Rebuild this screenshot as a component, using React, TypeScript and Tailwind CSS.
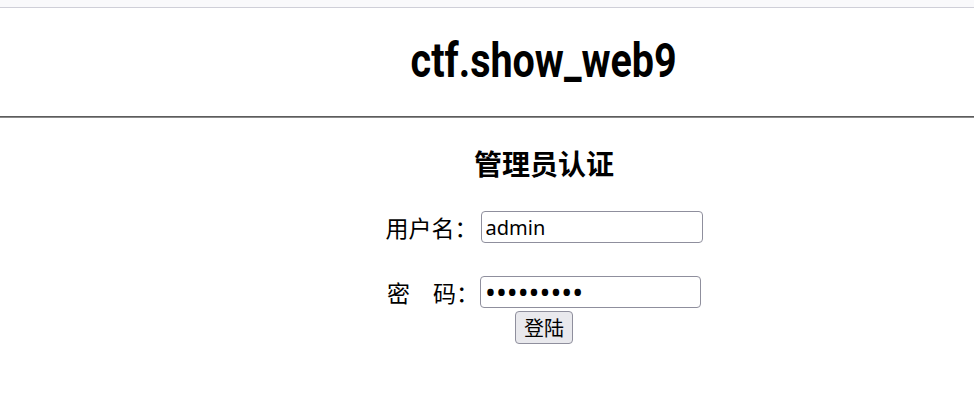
import { useState } from "react";

export default function App() {
  const [user, setUser] = useState("admin");
  const [pass, setPass] = useState("123456789");

  return (
    <div className="min-h-[405px] bg-white text-black font-['Noto_Sans','Noto_Sans_CJK_SC',sans-serif]">
      {/* browser strip */}
      <div className="h-2 bg-[#f9f9fb] border-b border-[#cfcfd8]" />

      <header className="pl-[114px] pt-[29px] pb-[31px] flex justify-center">
        <h1 className="inline-block scale-x-[0.823] text-[48px] leading-[48px] font-bold font-['Roboto',sans-serif]">
          ctf.show_web9
        </h1>
      </header>

      <hr className="border-0 border-t border-b border-t-[#5c5c5c] border-b-[#8a8a8a]" />

      <main className="pl-[114px] pt-[31px] flex flex-col items-center">
        <h2 className="text-[28px] leading-[28px] font-bold font-['Noto_Sans_CJK_SC',sans-serif]">
          管理员认证
        </h2>

        <form className="mt-[33px] flex flex-col items-center" onSubmit={(e) => e.preventDefault()}>
          <div className="flex items-center gap-[3px]">
            <label className="text-[23px] font-['Noto_Sans_CJK_SC',sans-serif]">用户名：</label>
            <input
              type="text"
              value={user}
              onChange={(e) => setUser(e.target.value)}
              className="w-[222px] h-8 px-1 text-[20px] border border-[#8f8f9d] rounded bg-white outline-none"
            />
          </div>

          <div className="mt-[30px] flex items-center gap-px">
            <label className="text-[23px] font-['Noto_Sans_CJK_SC',sans-serif]">密　码：</label>
            <input
              type="password"
              value={pass}
              onChange={(e) => setPass(e.target.value)}
              className="w-[221px] h-8 px-1 text-[29px] leading-none border border-[#8f8f9d] rounded bg-white outline-none"
            />
          </div>

          <button
            type="submit"
            className="mt-[2px] w-[58px] h-[33px] text-[20px] leading-none bg-[#e9e9ed] border border-[#8f8f9d] rounded font-['Noto_Sans_CJK_SC',sans-serif]"
          >
            登陆
          </button>
        </form>
      </main>
    </div>
  );
}
